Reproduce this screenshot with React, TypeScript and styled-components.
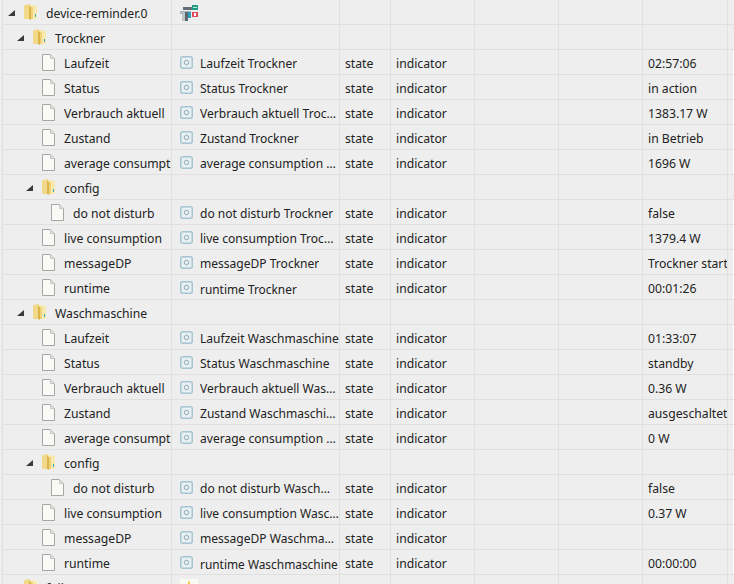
import React from "react";
import styled, { createGlobalStyle } from "styled-components";

const Global = createGlobalStyle`
  html, body { margin: 0; padding: 0; background: #eeeeee; overflow: hidden; }
`;

const Table = styled.div`
  width: 734px;
  height: 584px;
  overflow: hidden;
  padding-left: 2px;
  box-sizing: border-box;
  font-family: "Noto Sans", sans-serif;
  font-size: 12.2px;
  color: #222;
  background: #eeeeee;
`;

const Row = styled.div`
  display: grid;
  grid-template-columns: 169px 168px 51px 84px 84px 84px 85px 6px 1px;
  height: 25px;
  box-sizing: border-box;
  border-bottom: 1px solid #e0e0e0;
  width: 732px;
`;

const Cell = styled.div<{ $indent?: number }>`
  display: flex;
  align-items: center;
  box-sizing: border-box;
  height: 24px;
  padding: 1px 0 0 ${(p) => p.$indent ?? 5}px;
  border-left: 1px solid #e0e0e0;
  white-space: nowrap;
  overflow: hidden;
`;

const TextCell = styled(Cell)`
  padding-top: 3px;
`;

const WhiteEdge = styled.div<{ $on: boolean }>`
  height: 24px;
  background: ${(p) => (p.$on ? "#ffffff" : "transparent")};
`;

const Arrow = styled.span`
  width: 0;
  height: 0;
  flex: none;
  margin-right: 9px;
  border-style: solid;
  border-width: 0 0 6px 7px;
  border-color: transparent transparent #3a3a3a transparent;
`;

const FolderSvg = () => (
  <svg width="13" height="17" viewBox="0 0 13 17" style={{ flex: "none" }}>
    <path d="M0 2 Q0 1 1 1 L6 0 L6 15 L1 15 Q0 15 0 14 Z" fill="#f2d98a" />
    <path d="M6 1 L13 2 L13 15 L6 15 Z" fill="#f8e9ae" />
    <path d="M5 2 L7 3 L7 16 L5 15 Z" fill="#dcb44c" />
    <rect x="7" y="3" width="2" height="12" fill="#efd27a" />
    <rect x="11" y="10" width="1" height="3" fill="#3ba7c9" />
  </svg>
);

const FileSvg = () => (
  <svg width="13" height="17" viewBox="0 0 13 17" style={{ flex: "none" }}>
    <path d="M.5.5 H8.5 L12.5 4.5 V16.5 H.5 Z" fill="#f9f9f5" stroke="#a6a6a6" />
    <path d="M8.5.5 V4.5 H12.5" fill="#e2e2dc" stroke="#c8c8c8" />
  </svg>
);

const StateSvg = () => (
  <svg width="13" height="13" viewBox="0 0 13 13" style={{ flex: "none" }}>
    <rect x=".75" y=".75" width="11.5" height="11.5" rx="2" fill="#e9f0f2" stroke="#a6c4d2" strokeWidth="1.5" />
    <circle cx="6.5" cy="6.5" r="2.2" fill="none" stroke="#8aa9b8" />
  </svg>
);

const LogoSvg = () => (
  <svg width="20" height="20" viewBox="0 0 20 20" style={{ flex: "none" }}>
    <rect x="0" y="8" width="11" height="3" fill="#aab4b8" />
    <rect x="3" y="4" width="9" height="3" fill="#626e74" />
    <rect x="2" y="9" width="4" height="9" fill="#bcc4c8" />
    <rect x="5" y="9" width="3" height="9" fill="#59666c" />
    <rect x="8" y="9" width="3" height="6" fill="#2a9fba" />
    <rect x="12" y="2" width="6" height="5" fill="#1f9c84" />
    <rect x="13" y="4" width="4" height="1" fill="#bfe5dc" />
    <rect x="12" y="9" width="6" height="5" fill="#e4485a" />
    <rect x="14" y="10" width="2" height="3" fill="#fff" />
  </svg>
);

const StarSvg = () => (
  <svg width="18" height="18" viewBox="0 0 18 18" style={{ flex: "none" }}>
    <rect width="18" height="18" fill="#fbfbf3" />
    <path d="M9 1 L11 7 L17 8 L12 11 L13 17 L9 13 L5 17 L6 11 L1 8 L7 7 Z" fill="#f2cc3a" />
  </svg>
);

const Name = styled.span`
  margin-left: 9px;
  padding-top: 2px;
`;

const Label = styled.span<{ $tight: boolean }>`
  overflow: hidden;
  text-overflow: ellipsis;
  white-space: nowrap;
  min-width: 0;
  margin-left: 7px;
  padding-top: 2px;
  font-size: ${(p) => (p.$tight ? "11.9px" : "12.05px")};
`;

type Data = {
  level: number;
  name: string;
  kind: "folder" | "file";
  label?: string;
  value?: string;
  logo?: "logo" | "star";
};

const group = (device: string, values: Record<string, string>): Data[] => {
  const leaf = (name: string, level = 2): Data => ({
    level,
    name,
    kind: "file",
    label: `${name} ${device}`,
    value: values[name] ?? "",
  });
  return [
    { level: 1, name: device, kind: "folder" },
    leaf("Laufzeit"),
    leaf("Status"),
    leaf("Verbrauch aktuell"),
    leaf("Zustand"),
    leaf("average consumption"),
    { level: 2, name: "config", kind: "folder" },
    leaf("do not disturb", 3),
    leaf("live consumption"),
    leaf("messageDP"),
    leaf("runtime"),
  ];
};

const rows: Data[] = [
  { level: 0, name: "device-reminder.0", kind: "folder", logo: "logo" },
  ...group("Trockner", {
    Laufzeit: "02:57:06",
    Status: "in action",
    "Verbrauch aktuell": "1383.17 W",
    Zustand: "in Betrieb",
    "average consumption": "1696 W",
    "do not disturb": "false",
    "live consumption": "1379.4 W",
    messageDP: "Trockner starts",
    runtime: "00:01:26",
  }),
  ...group("Waschmaschine", {
    Laufzeit: "01:33:07",
    Status: "standby",
    "Verbrauch aktuell": "0.36 W",
    Zustand: "ausgeschaltet",
    "average consumption": "0 W",
    "do not disturb": "false",
    "live consumption": "0.37 W",
    runtime: "00:00:00",
  }),
  { level: 0, name: "followers", kind: "folder", logo: "star" },
];

/* Tree indent measured from the first cell's inner edge (x = 3). */
const indentFor = (r: Data) => (r.kind === "file" ? 39 + (r.level - 2) * 9 : 5 + r.level * 9);

export default function App() {
  return (
    <>
      <Global />
      <Table>
        {rows.map((r, i) => (
          <Row key={i}>
            <Cell $indent={indentFor(r)}>
              {r.kind === "folder" && <Arrow />}
              {r.kind === "folder" ? <FolderSvg /> : <FileSvg />}
              <Name>{r.name}</Name>
            </Cell>
            <Cell $indent={8}>
              {r.logo === "logo" && <LogoSvg />}
              {r.logo === "star" && <StarSvg />}
              {r.label && (
                <>
                  <StateSvg />
                  <Label $tight={r.name === "runtime"}>{r.label}</Label>
                </>
              )}
            </Cell>
            <TextCell>{r.kind === "file" ? "state" : ""}</TextCell>
            <TextCell>{r.kind === "file" ? "indicator" : ""}</TextCell>
            <Cell />
            <Cell />
            <TextCell>{r.value}</TextCell>
            <Cell />
            <WhiteEdge $on={r.kind === "file"} />
          </Row>
        ))}
      </Table>
    </>
  );
}
